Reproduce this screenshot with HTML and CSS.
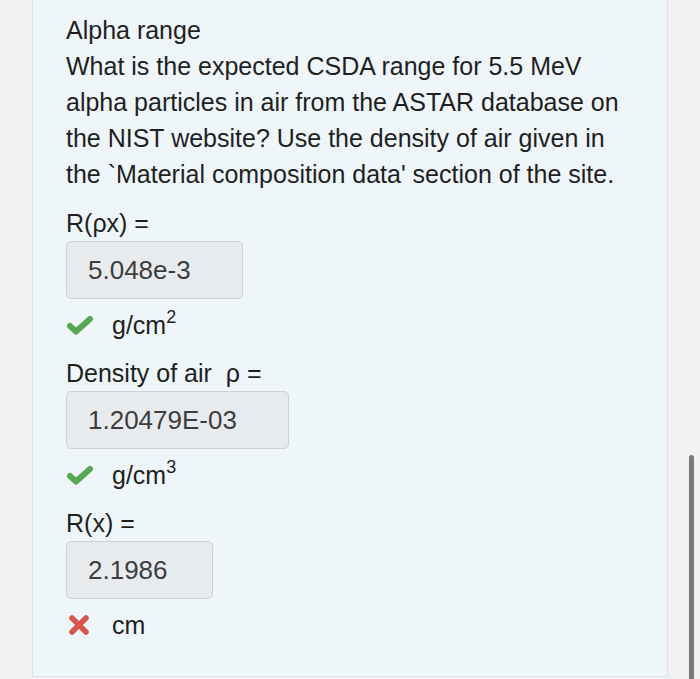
FILE: index.html
```html
<!DOCTYPE html>
<html>
<head>
<meta charset="utf-8">
<link rel="stylesheet" href="styles.css">
</head>
<body>
<div class="page">
  <div class="card">
    <div class="question">
      <div>Alpha range</div>
      <div>What is the expected CSDA range for 5.5 MeV<br>alpha particles in air from the ASTAR database on<br>the NIST website? Use the density of air given in<br>the `Material composition data' section of the site.</div>
    </div>

    <div class="field">
      <div class="label">R(ρx) =</div>
      <div class="input w1">5.048e-3</div>
      <div class="unit">
        <svg class="icon" width="28" height="22" viewBox="0 0 28 22"><path d="M4 12 L10 17.5 L24 5" fill="none" stroke="#55a955" stroke-width="6" stroke-linecap="round" stroke-linejoin="round"/></svg>
        <span>g/cm<sup>2</sup></span>
      </div>
    </div>

    <div class="field">
      <div class="label">Density of air&nbsp; ρ =</div>
      <div class="input w2">1.20479E-03</div>
      <div class="unit">
        <svg class="icon" width="28" height="22" viewBox="0 0 28 22"><path d="M4 12 L10 17.5 L24 5" fill="none" stroke="#55a955" stroke-width="6" stroke-linecap="round" stroke-linejoin="round"/></svg>
        <span>g/cm<sup>3</sup></span>
      </div>
    </div>

    <div class="field">
      <div class="label">R(x) =</div>
      <div class="input w3">2.1986</div>
      <div class="unit">
        <svg class="icon" width="28" height="22" viewBox="0 0 28 22"><path d="M6 4 L20 18 M20 4 L6 18" fill="none" stroke="#d9534f" stroke-width="5.5" stroke-linecap="round"/></svg>
        <span>cm</span>
      </div>
    </div>
  </div>
  <div class="scrollbar"></div>
</div>
</body>
</html>
```

FILE: styles.css
```css
html, body {
  margin: 0;
  padding: 0;
  background: #f1f1f1;
}
body {
  font-family: "Liberation Sans", Arial, sans-serif;
  color: #1f1f1f;
  overflow: hidden;
}
.page {
  position: relative;
  width: 700px;
  height: 679px;
  padding-left: 32px;
  box-sizing: border-box;
}
.card {
  width: 636px;
  height: 677px;
  box-sizing: border-box;
  background: #eef6fa;
  border-left: 1px solid #dde3e6;
  border-right: 1px solid #dde3e6;
  border-bottom: 1px solid #dde3e6;
  padding: 12px 10px 0 33px;
}
.question {
  font-size: 25px;
  line-height: 36px;
  white-space: nowrap;
}
.field {
  margin-top: 13px;
}
.field + .field {
  margin-top: 12px;
}
.label {
  font-size: 25px;
  line-height: 36px;
}
.input {
  height: 58px;
  box-sizing: border-box;
  background: #e8ebee;
  border: 1.5px solid #cdd2d6;
  border-radius: 5px;
  font-size: 26px;
  color: #3d3d3d;
  display: flex;
  align-items: center;
  padding-left: 21px;
}
.w1 { width: 177px; }
.w2 { width: 223px; }
.w3 { width: 147px; }
.unit {
  margin-top: 8px;
  height: 36px;
  display: flex;
  align-items: center;
  font-size: 25px;
  line-height: 36px;
}
.unit .icon {
  margin-left: 0;
  margin-right: 18px;
}
.unit sup {
  font-size: 18px;
  line-height: 0;
  vertical-align: 11px;
}
.scrollbar {
  position: absolute;
  left: 689px;
  top: 455px;
  width: 5px;
  height: 224px;
  background: #7a7a7a;
  border-radius: 3px 3px 0 0;
}
```
